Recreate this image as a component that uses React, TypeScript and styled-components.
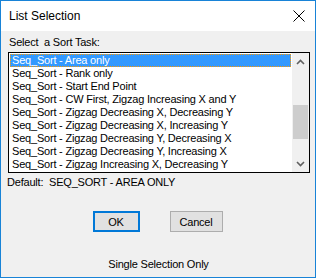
import React, { useState } from 'react';
import styled, { createGlobalStyle } from 'styled-components';

const GlobalStyle = createGlobalStyle`
  html, body {
    margin: 0;
    padding: 0;
    background: #ffffff;
  }
  * {
    box-sizing: border-box;
  }
`;

const Window = styled.div`
  width: 316px;
  height: 278px;
  border: 1px solid #1883d7;
  background: #f0f0f0;
  display: flex;
  flex-direction: column;
  font-family: "Liberation Sans", Arial, sans-serif;
  font-size: 11px;
  letter-spacing: -0.2px;
  color: #000;
`;

const TitleBar = styled.div`
  height: 30px;
  background: #ffffff;
  display: flex;
  align-items: center;
  justify-content: space-between;
  padding: 0 10px 0 8px;
  flex-shrink: 0;
`;

const Title = styled.span`
  font-family: "Liberation Sans", Arial, sans-serif;
  font-size: 12px;
  letter-spacing: 0;
  color: #000;
`;

const CloseIcon = styled.svg`
  width: 12px;
  height: 12px;
  display: block;
`;

const Body = styled.div`
  flex: 1;
  display: flex;
  flex-direction: column;
  padding: 5px 6px 0 7px;
`;

const Prompt = styled.div`
  height: 16px;
  line-height: 13px;
  padding-left: 1px;
  white-space: pre;
`;

const ListBox = styled.div`
  width: 302px;
  height: 121px;
  border: 1px solid #000;
  background: #fff;
  display: flex;
`;

const Items = styled.div`
  flex: 1;
  padding: 1px;
  overflow: hidden;
`;

const Item = styled.div<{ $selected?: boolean }>`
  height: 13px;
  line-height: 12px;
  padding-left: 2px;
  white-space: nowrap;
  background: ${p => (p.$selected ? '#3399ff' : 'transparent')};
  color: ${p => (p.$selected ? '#fff' : '#000')};
  outline: ${p => (p.$selected ? '1px dotted #ff9900' : 'none')};
  outline-offset: -1px;
`;

const ScrollBar = styled.div`
  width: 17px;
  background: #f0f0f0;
  display: flex;
  flex-direction: column;
`;

const Arrow = styled.div`
  height: 17px;
  display: flex;
  align-items: center;
  justify-content: center;
`;

const Track = styled.div`
  flex: 1;
  display: flex;
  flex-direction: column;
  padding-top: 35px;
`;

const Thumb = styled.div`
  height: 34px;
  margin: 0 1px;
  background: #cdcdcd;
`;

const DefaultLine = styled.div`
  margin-top: 3px;
  margin-left: -1px;
  line-height: 13px;
  white-space: pre;
`;

const Buttons = styled.div`
  display: flex;
  justify-content: center;
  gap: 30px;
  margin-top: 22px;
  padding-right: 2px;
`;

const Button = styled.button<{ $focused?: boolean; $w: number }>`
  width: ${p => p.$w}px;
  height: 21px;
  padding: 0;
  background: #e1e1e1;
  border: ${p => (p.$focused ? '2px solid #0078d7' : '1px solid #adadad')};
  font-family: "Liberation Sans", Arial, sans-serif;
  font-size: 11px;
  letter-spacing: -0.2px;
  color: #000;
`;

const Footer = styled.div`
  margin-top: 26px;
  text-align: center;
  line-height: 13px;
`;

const tasks = [
  'Seq_Sort - Area only',
  'Seq_Sort - Rank only',
  'Seq_Sort - Start End Point',
  'Seq_Sort - CW First, Zigzag Increasing X and Y',
  'Seq_Sort - Zigzag Decreasing X, Decreasing Y',
  'Seq_Sort - Zigzag Decreasing X, Increasing Y',
  'Seq_Sort - Zigzag Decreasing Y, Decreasing X',
  'Seq_Sort - Zigzag Decreasing Y, Increasing X',
  'Seq_Sort - Zigzag Increasing X, Decreasing Y',
];

const App: React.FC = () => {
  const [selected, setSelected] = useState(0);

  return (
    <>
      <GlobalStyle />
      <Window>
        <TitleBar>
          <Title>List Selection</Title>
          <CloseIcon viewBox="0 0 12 12">
            <path d="M0.5 0.5 L11.5 11.5 M11.5 0.5 L0.5 11.5" stroke="#000" strokeWidth="1" />
          </CloseIcon>
        </TitleBar>
        <Body>
          <Prompt>Select  a Sort Task:</Prompt>
          <ListBox>
            <Items>
              {tasks.map((t, i) => (
                <Item key={t} $selected={i === selected} onClick={() => setSelected(i)}>
                  {t}
                </Item>
              ))}
            </Items>
            <ScrollBar>
              <Arrow>
                <svg width="9" height="6" viewBox="0 0 9 6">
                  <path d="M1 5 L4.5 1.5 L8 5" stroke="#606060" strokeWidth="1.6" fill="none" />
                </svg>
              </Arrow>
              <Track>
                <Thumb />
              </Track>
              <Arrow>
                <svg width="9" height="6" viewBox="0 0 9 6">
                  <path d="M1 1 L4.5 4.5 L8 1" stroke="#606060" strokeWidth="1.6" fill="none" />
                </svg>
              </Arrow>
            </ScrollBar>
          </ListBox>
          <DefaultLine>Default:  SEQ_SORT - AREA ONLY</DefaultLine>
          <Buttons>
            <Button $focused $w={47}>OK</Button>
            <Button $w={53}>Cancel</Button>
          </Buttons>
          <Footer>Single Selection Only</Footer>
        </Body>
      </Window>
    </>
  );
};

export default App;
